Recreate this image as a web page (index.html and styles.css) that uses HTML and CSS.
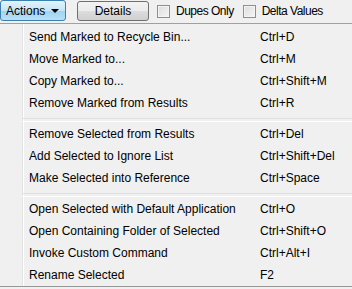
FILE: index.html
```html
<!DOCTYPE html>
<html lang="en">
<head>
    <meta charset="UTF-8">
    <title>Actions Menu</title>
    <link rel="stylesheet" href="styles.css">
</head>
<body>
    <div class="toolbar">
        <button class="btn btn-actions">Actions <span class="caret"></span></button>
        <button class="btn btn-details">Details</button>
        <label class="check"><span class="box"></span><span class="check-label">Dupes Only</span></label>
        <label class="check"><span class="box"></span><span class="check-label">Delta Values</span></label>
    </div>

    <div class="menu">
        <div class="item"><span>Send Marked to Recycle Bin...</span><span>Ctrl+D</span></div>
        <div class="item"><span>Move Marked to...</span><span>Ctrl+M</span></div>
        <div class="item"><span>Copy Marked to...</span><span>Ctrl+Shift+M</span></div>
        <div class="item"><span>Remove Marked from Results</span><span>Ctrl+R</span></div>
        <div class="sep"></div>
        <div class="item"><span>Remove Selected from Results</span><span>Ctrl+Del</span></div>
        <div class="item"><span>Add Selected to Ignore List</span><span>Ctrl+Shift+Del</span></div>
        <div class="item"><span>Make Selected into Reference</span><span>Ctrl+Space</span></div>
        <div class="sep"></div>
        <div class="item"><span>Open Selected with Default Application</span><span>Ctrl+O</span></div>
        <div class="item"><span>Open Containing Folder of Selected</span><span>Ctrl+Shift+O</span></div>
        <div class="item"><span>Invoke Custom Command</span><span>Ctrl+Alt+I</span></div>
        <div class="item"><span>Rename Selected</span><span>F2</span></div>
    </div>
</body>
</html>
```

FILE: styles.css
```css
* {
    margin: 0;
    padding: 0;
    box-sizing: border-box;
}

body {
    font-family: "Liberation Sans", Arial, sans-serif;
    font-size: 12px;
    background: #f0f0f0;
    color: #000;
    width: 352px;
    height: 289px;
    overflow: hidden;
}

.toolbar {
    height: 23px;
    display: flex;
    align-items: flex-start;
    padding-top: 1px;
}

.btn {
    font-family: inherit;
    font-size: 12px;
    height: 20px;
    border-radius: 3px;
    color: #000;
}

.btn-actions {
    width: 66px;
    margin-top: -1px;
    height: 21px;
    border: 1px solid #3c7fb1;
    background: linear-gradient(#e2f3fc, #c6e6f7 50%, #9dd3f0 51%, #b9e1f5);
    padding: 0 6px 0 5px;
    display: flex;
    align-items: center;
    justify-content: space-between;
}

.caret {
    width: 0;
    height: 0;
    border-left: 4px solid transparent;
    border-right: 4px solid transparent;
    border-top: 4px solid #000;
}

.btn-details {
    width: 72px;
    margin-left: 11px;
    border: 1px solid #707070;
    background: linear-gradient(#f2f2f2, #ebebeb 50%, #dddddd 51%, #cfcfcf);
}

.check {
    display: flex;
    align-items: center;
    height: 20px;
    margin-left: 8px;
}

.check + .check {
    margin-left: 9px;
}

.check-label {
    letter-spacing: -0.5px;
}

.box {
    width: 13px;
    height: 13px;
    border: 1px solid #8e8f8f;
    background: linear-gradient(135deg, #dcdcdc, #f6f6f6);
    box-shadow: inset 0 0 0 1px #f4f4f4;
    margin-right: 6px;
}

.menu {
    border-top: 1px solid #a0a0a0;
    border-bottom: 1px solid #979797;
    padding-top: 2px;
    background: linear-gradient(90deg, transparent 22px, #e2e3e3 22px, #e2e3e3 23px, #fff 23px, #fff 24px, transparent 24px);
}

.item {
    height: 22px;
    display: grid;
    grid-template-columns: 231px auto;
    align-items: center;
    padding-left: 29px;
    white-space: nowrap;
}

.item span:first-child {
    overflow: hidden;
}

.sep {
    height: 9px;
    margin-left: 22px;
    padding-top: 4px;
}

.sep::before {
    content: "";
    display: block;
    height: 2px;
    border-top: 1px solid #e0e0e0;
    border-bottom: 1px solid #fff;
}
```
